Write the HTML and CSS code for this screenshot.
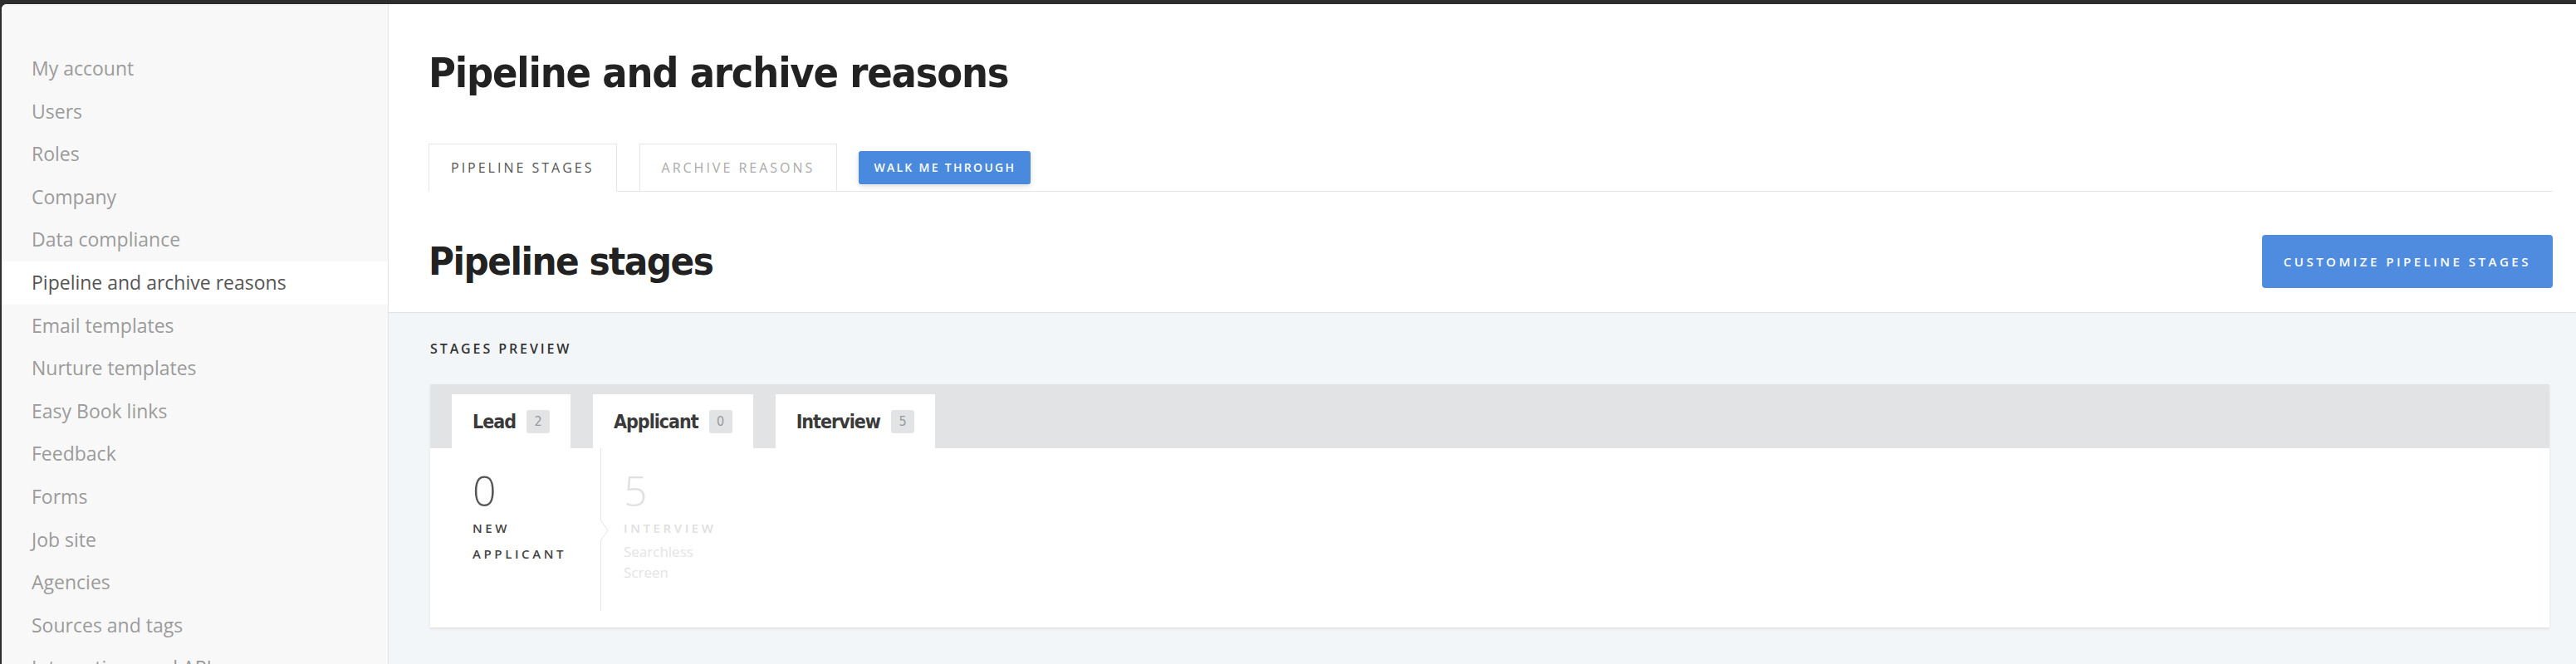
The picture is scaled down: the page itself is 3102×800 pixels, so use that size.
FILE: index.html
```html
<!DOCTYPE html>
<html lang="en">
<head>
  <meta charset="UTF-8" />
  <meta name="viewport" content="width=device-width, initial-scale=1.0"/>
  <title>Pipeline and archive reasons</title>
  <link rel="stylesheet" href="styles.css">
</head>
<body>
  <div class="app">
    <aside class="sidebar">
      <ul class="settings-nav">
        <li><a href="#">My account</a></li>
        <li><a href="#">Users</a></li>
        <li><a href="#">Roles</a></li>
        <li><a href="#">Company</a></li>
        <li><a href="#">Data compliance</a></li>
        <li class="active"><a href="#">Pipeline and archive reasons</a></li>
        <li><a href="#">Email templates</a></li>
        <li><a href="#">Nurture templates</a></li>
        <li><a href="#">Easy Book links</a></li>
        <li><a href="#">Feedback</a></li>
        <li><a href="#">Forms</a></li>
        <li><a href="#">Job site</a></li>
        <li><a href="#">Agencies</a></li>
        <li><a href="#">Sources and tags</a></li>
        <li><a href="#">Integrations and API</a></li>
      </ul>
    </aside>

    <main class="content">
      <div class="page-head">
        <h1>Pipeline and archive reasons</h1>
        <div class="tabs">
          <a href="#" class="tab active">Pipeline stages</a>
          <a href="#" class="tab">Archive reasons</a>
          <button class="walk-btn">Walk me through</button>
        </div>
      </div>

      <div class="section-head">
        <h2>Pipeline stages</h2>
        <button class="primary-btn">Customize pipeline stages</button>
      </div>

      <section class="preview">
        <h4 class="preview-label">Stages preview</h4>
        <div class="preview-card">
          <div class="stage-tabs">
            <div class="stage-tab">Lead <span class="count">2</span></div>
            <div class="stage-tab">Applicant <span class="count">0</span></div>
            <div class="stage-tab">Interview <span class="count">5</span></div>
          </div>
          <div class="stages">
            <div class="stage">
              <div class="stage-count">0</div>
              <div class="stage-name">New applicant</div>
            </div>
            <div class="stage muted">
              <svg class="chevron" width="12" height="24" viewBox="0 0 12 24">
                <rect x="0" y="0" width="2" height="24" fill="#fff"/>
                <path d="M0.5 0 L9 12 L0.5 24" fill="#fff" stroke="#e4e4e4"/>
              </svg>
              <div class="stage-count">5</div>
              <div class="stage-name">Interview</div>
              <div class="stage-sub">Searchless Screen</div>
            </div>
          </div>
        </div>
      </section>
    </main>
  </div>
</body>
</html>
```

FILE: styles.css
```css
body {
  margin: 0;
  background: #2e2e2e;
  font-family: "Open Sans", sans-serif;
}

.app {
  display: flex;
  height: 795px;
  margin: 5px 0 0 2px;
  background: white;
  overflow: hidden;
  border-top-left-radius: 6px;
}

/* settings menu */

.sidebar {
  width: 466px;
  flex-shrink: 0;
  box-sizing: border-box;
  background: #f8f8f8;
  border-right: 1px solid #e4e4e4;
  padding-top: 52px;
}

.settings-nav {
  list-style: none;
  margin: 0;
  padding: 0;
}

.settings-nav a {
  display: block;
  padding-left: 36px;
  font-size: 23px;
  line-height: 51.6px;
  color: #9b9b9b;
  text-decoration: none;
  white-space: nowrap;
}

.settings-nav .active a {
  background: white;
  color: #555;
}

/* main area */

.content {
  flex: 1;
  min-width: 0;
  display: flex;
  flex-direction: column;
}

.page-head {
  padding: 50px 28px 0 48px;
}

h1, h2 {
  margin: 0;
  font-family: "Liberation Sans Narrow", "DejaVu Sans Condensed", sans-serif;
  font-weight: bold;
  font-size: 50px;
  line-height: 66px;
  letter-spacing: -1.2px;
  color: #222;
}

h2 {
  font-size: 47px;
  letter-spacing: -1.5px;
}

.tabs {
  display: flex;
  align-items: center;
  margin-top: 52px;
  border-bottom: 1px solid #e6e6e6;
}

.tab {
  padding: 18px 26px;
  margin-right: 27px;
  margin-bottom: -1px;
  border: 1px solid #e6e6e6;
  background: white;
  font-size: 16px;
  line-height: 20px;
  letter-spacing: 3px;
  text-transform: uppercase;
  color: #aaa;
  text-decoration: none;
}

.tab.active {
  border-bottom-color: white;
  color: #555;
}

button {
  border: none;
  cursor: pointer;
  color: white;
  font-family: "Open Sans", sans-serif;
  font-weight: 600;
  text-transform: uppercase;
}

.walk-btn {
  height: 40px;
  padding: 0 18px;
  margin-left: -1px;
  background: #4a8ade;
  border-radius: 3px;
  font-size: 14px;
  letter-spacing: 2.3px;
  box-shadow: 0 2px 6px rgba(0,0,0,0.15);
}

.section-head {
  display: flex;
  justify-content: space-between;
  align-items: center;
  padding: 51px 28px 28px 48px;
  border-bottom: 1px solid #e2e2e2;
}

.primary-btn {
  height: 64px;
  padding: 0 26px;
  background: #4f8cdf;
  border-radius: 4px;
  font-size: 15px;
  letter-spacing: 3.5px;
}

/* stages preview */

.preview {
  flex: 1;
  background: #f3f6f9;
  padding: 32px 32px 0 50px;
}

.preview-label {
  margin: 0 0 32px;
  font-size: 16px;
  line-height: 22px;
  font-weight: 600;
  letter-spacing: 2.9px;
  text-transform: uppercase;
  color: #333;
}

.preview-card {
  background: white;
  border-bottom: 1px solid #e2e2e2;
  box-shadow: 0 1px 3px rgba(0,0,0,0.08);
}

.stage-tabs {
  display: flex;
  gap: 27px;
  height: 77px;
  box-sizing: border-box;
  padding: 12px 0 0 26px;
  background: #e2e3e5;
}

.stage-tab {
  display: flex;
  align-items: center;
  gap: 13px;
  padding: 0 25px;
  background: white;
  font-family: "Liberation Sans Narrow", "DejaVu Sans Condensed", sans-serif;
  font-weight: bold;
  font-size: 23px;
  letter-spacing: -1px;
  color: #3a3a3a;
}

.count {
  display: flex;
  align-items: center;
  justify-content: center;
  width: 28px;
  height: 28px;
  border-radius: 3px;
  background: #e2e3e5;
  font-weight: normal;
  font-size: 16px;
  letter-spacing: 0;
  color: #999;
}

.stages {
  display: flex;
  align-items: flex-start;
  min-height: 216px;
  padding-left: 24px;
}

.stage {
  position: relative;
  width: 181px;
  box-sizing: border-box;
  padding: 21px 27px 34px;
}

.stage + .stage {
  border-left: 1px solid #e6e6e6;
}

.stage-count {
  font-size: 50px;
  line-height: 60px;
  font-weight: 300;
  color: #555;
}

.stage-name {
  font-size: 15px;
  line-height: 31px;
  font-weight: 600;
  letter-spacing: 3.6px;
  text-transform: uppercase;
  color: #444;
}

.stage-sub {
  font-size: 17px;
  line-height: 25px;
}

.muted .stage-count,
.muted .stage-name {
  color: #e0e0e0;
}

.muted .stage-sub {
  color: #e4e4e4;
}

.chevron {
  position: absolute;
  left: -1px;
  top: 87px;
}
```
